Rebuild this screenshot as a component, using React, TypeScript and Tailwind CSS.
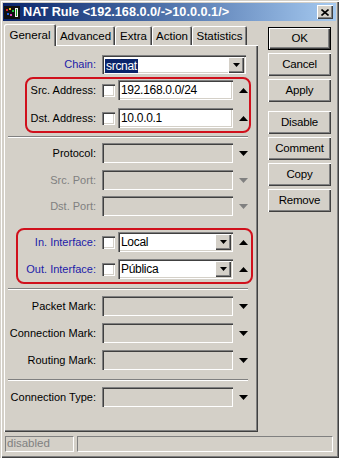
import React from "react";

const insetField =
  "shadow-[inset_1px_1px_0_#808080,inset_2px_2px_0_#404040,inset_-1px_-1px_0_#ffffff,inset_-2px_-2px_0_#d4d0c8]";
const raised =
  "shadow-[inset_1px_1px_0_#ffffff,inset_-1px_-1px_0_#404040,inset_-2px_-2px_0_#808080]";

function Up() {
  return (
    <div className="w-[12px] ml-[4px] flex justify-center">
      <svg width="9" height="5" viewBox="0 0 9 5">
        <polygon points="0,5 4.5,0 9,5" fill="#000" />
      </svg>
    </div>
  );
}

function Down({ gray }: { gray?: boolean }) {
  return (
    <div className="w-[12px] ml-[4px] flex justify-center">
      <svg width="9" height="5" viewBox="0 0 9 5">
        <polygon points="0,0 9,0 4.5,5" fill={gray ? "#808080" : "#000"} />
      </svg>
    </div>
  );
}

function DropBtn() {
  return (
    <div className={`w-[16px] h-[16px] bg-[#d4d0c8] ${raised} flex items-center justify-center`}>
      <svg width="7" height="4" viewBox="0 0 7 4">
        <polygon points="0,0 7,0 3.5,4" fill="#000" />
      </svg>
    </div>
  );
}

function Label({ text, color }: { text: string; color?: string }) {
  return (
    <div
      className={`w-[92px] text-right text-[11px] whitespace-nowrap ${color ?? "text-black"}`}
    >
      {text}
    </div>
  );
}

function Check() {
  return <div className={`w-[13px] h-[13px] bg-white ${insetField}`} />;
}

function Sep({ mt }: { mt: string }) {
  return (
    <div className={`${mt} ml-[4px] w-[240px] h-[2px] border-t border-[#808080] border-b border-b-white`} />
  );
}

function Btn({ text, def, mt }: { text: string; def?: boolean; mt?: string }) {
  return (
    <div
      className={`${mt ?? ""} h-[23px] w-[63px] flex items-center justify-center text-[11.5px] tracking-[-0.2px] ${
        def ? "border border-black" : ""
      }`}
    >
      <div className={`w-full h-full flex items-center justify-center ${raised}`}>{text}</div>
    </div>
  );
}

export default function App() {
  return (
    <div
      className="w-[339px] h-[458px] bg-[#d4d0c8] p-[3px] flex flex-col text-black shadow-[inset_1px_1px_0_#d4d0c8,inset_2px_2px_0_#ffffff,inset_-1px_-1px_0_#404040,inset_-2px_-2px_0_#808080]"
      style={{ fontFamily: "'Liberation Sans', Arial, sans-serif" }}
    >
      {/* Title bar */}
      <div className="h-[18px] flex items-center bg-gradient-to-r from-[#0a246a] to-[#a6caf0] pl-[1px] pr-[3px]">
        <svg width="16" height="13" viewBox="0 0 16 13">
          <rect x="0" y="0" width="16" height="13" fill="#101010" />
          <rect x="2" y="3" width="2" height="2" fill="#e02020" />
          <rect x="5" y="2" width="2" height="2" fill="#e0c020" />
          <rect x="8" y="4" width="2" height="2" fill="#20c040" />
          <rect x="3" y="7" width="2" height="2" fill="#2060e0" />
          <rect x="6" y="8" width="2" height="2" fill="#e040c0" />
          <rect x="11" y="2" width="3" height="9" fill="#f0f0f0" />
          <rect x="12" y="3" width="1" height="7" fill="#20a020" />
        </svg>
        <div className="ml-[3px] flex-1 text-white font-bold text-[12.7px] whitespace-nowrap leading-none">
          NAT Rule &lt;192.168.0.0/-&gt;10.0.0.1/&gt;
        </div>
        <div
          className={`w-[16px] h-[14px] bg-[#d4d0c8] ${raised} flex items-center justify-center`}
        >
          <svg width="8" height="7" viewBox="0 0 8 7">
            <path d="M0.5 0.5 L7.5 6.5 M7.5 0.5 L0.5 6.5" stroke="#000" strokeWidth="1.6" />
          </svg>
        </div>
      </div>

      {/* Main */}
      <div className="flex h-[411px]">
        <div className="ml-[1px] w-[254px] mt-[3px] flex flex-col">
          {/* Tabs */}
          <div className="flex items-end h-[21px] text-[11.5px]">
            <div
              className={`relative z-10 w-[52px] h-[22px] -mb-[1px] bg-[#d4d0c8] rounded-t-[2px] flex justify-center pt-[3px] shadow-[inset_1px_1px_0_#ffffff,inset_-1px_0_0_#404040,inset_-2px_0_0_#808080]`}
            >
              General
            </div>
            {[
              ["Advanced", "w-[59px]"],
              ["Extra", "w-[37px]"],
              ["Action", "w-[40px]"],
              ["Statistics", "w-[55px]"],
            ].map(([t, w]) => (
              <div
                key={t}
                className={`${w} h-[19px] rounded-t-[2px] flex justify-center pt-[2px] shadow-[inset_1px_1px_0_#ffffff,inset_-1px_0_0_#404040,inset_-2px_0_0_#808080]`}
              >
                {t}
              </div>
            ))}
          </div>

          {/* Panel */}
          <div className="relative h-[387px] flex flex-col shadow-[inset_1px_1px_0_#ffffff,inset_-1px_-1px_0_#404040,inset_-2px_-2px_0_#808080]">
            {/* annotation boxes */}
            <div className="absolute left-[21px] top-[32px] w-[226px] h-[56px] border-2 border-[#d0101c] rounded-[8px] pointer-events-none" />
            <div className="absolute left-[12px] top-[183px] w-[237px] h-[56px] border-2 border-[#d0101c] rounded-[8px] pointer-events-none" />

            {/* Chain */}
            <div className="mt-[10px] h-[19px] flex items-center">
              <Label text="Chain:" color="text-[#1c1ca8]" />
              <div className={`ml-[6px] w-[144px] h-[19px] bg-white ${insetField} flex items-center pl-[3px] pr-[2px]`}>
                <div className="flex-1">
                  <span className="bg-[#0a246a] text-white text-[12px] tracking-[-0.3px] px-[1px]">srcnat</span>
                </div>
                <DropBtn />
              </div>
            </div>

            {/* Src address */}
            <div className="mt-[6px] h-[20px] flex items-center">
              <Label text="Src. Address:" />
              <div className="ml-[6px]"><Check /></div>
              <div className={`ml-[3px] w-[115px] h-[20px] bg-white ${insetField} flex items-center pl-[3px] text-[12px] tracking-[-0.3px]`}>
                192.168.0.0/24
              </div>
              <Up />
            </div>

            {/* Dst address */}
            <div className="mt-[8px] h-[20px] flex items-center">
              <Label text="Dst. Address:" />
              <div className="ml-[6px]"><Check /></div>
              <div className={`ml-[3px] w-[115px] h-[20px] bg-white ${insetField} flex items-center pl-[3px] text-[12px] tracking-[-0.3px]`}>
                10.0.0.1
              </div>
              <Up />
            </div>

            <Sep mt="mt-[8px]" />

            {/* Protocol */}
            <div className="mt-[5px] h-[20px] flex items-center">
              <Label text="Protocol:" />
              <div className={`ml-[6px] w-[131px] h-[20px] ${insetField}`} />
              <Down />
            </div>
            <div className="mt-[7px] h-[20px] flex items-center">
              <Label text="Src. Port:" color="text-[#808080]" />
              <div className={`ml-[6px] w-[131px] h-[20px] ${insetField}`} />
              <Down gray />
            </div>
            <div className="mt-[6px] h-[20px] flex items-center">
              <Label text="Dst. Port:" color="text-[#808080]" />
              <div className={`ml-[6px] w-[131px] h-[20px] ${insetField}`} />
              <Down gray />
            </div>

            {/* Interfaces */}
            <div className="mt-[16px] h-[20px] flex items-center">
              <Label text="In. Interface:" color="text-[#1c1ca8]" />
              <div className="ml-[6px]"><Check /></div>
              <div className={`ml-[3px] w-[115px] h-[20px] bg-white ${insetField} flex items-center pl-[3px] pr-[2px] text-[12px] tracking-[-0.3px]`}>
                <div className="flex-1">Local</div>
                <DropBtn />
              </div>
              <Up />
            </div>
            <div className="mt-[7px] h-[20px] flex items-center">
              <Label text="Out. Interface:" color="text-[#1c1ca8]" />
              <div className="ml-[6px]"><Check /></div>
              <div className={`ml-[3px] w-[115px] h-[20px] bg-white ${insetField} flex items-center pl-[3px] pr-[2px] text-[12px] tracking-[-0.3px]`}>
                <div className="flex-1">Pública</div>
                <DropBtn />
              </div>
              <Up />
            </div>

            <Sep mt="mt-[9px]" />

            <div className="mt-[6px] h-[20px] flex items-center">
              <Label text="Packet Mark:" />
              <div className={`ml-[6px] w-[131px] h-[20px] ${insetField}`} />
              <Down />
            </div>
            <div className="mt-[7px] h-[20px] flex items-center">
              <Label text="Connection Mark:" />
              <div className={`ml-[6px] w-[131px] h-[20px] ${insetField}`} />
              <Down />
            </div>
            <div className="mt-[7px] h-[20px] flex items-center">
              <Label text="Routing Mark:" />
              <div className={`ml-[6px] w-[131px] h-[20px] ${insetField}`} />
              <Down />
            </div>

            <Sep mt="mt-[9px]" />

            <div className="mt-[6px] h-[20px] flex items-center">
              <Label text="Connection Type:" />
              <div className={`ml-[6px] w-[131px] h-[20px] ${insetField}`} />
              <Down />
            </div>
          </div>
        </div>

        {/* Buttons */}
        <div className="ml-[10px] w-[63px] mt-[6px] flex flex-col">
          <Btn text="OK" def />
          <Btn text="Cancel" mt="mt-[3px]" />
          <Btn text="Apply" mt="mt-[3px]" />
          <Btn text="Disable" mt="mt-[9px]" />
          <Btn text="Comment" mt="mt-[3px]" />
          <Btn text="Copy" mt="mt-[3px]" />
          <Btn text="Remove" mt="mt-[3px]" />
        </div>
      </div>

      {/* Status bar */}
      <div className="mt-[4px] h-[16px] flex">
        <div className="ml-[2px] w-[69px] h-[16px] border border-[#808080] border-r-white border-b-white flex items-center pl-[1px] text-[11.5px] text-[#808080]">
          disabled
        </div>
        <div className="ml-[3px] w-[256px] h-[16px] border border-[#808080] border-r-white border-b-white" />
      </div>
    </div>
  );
}
